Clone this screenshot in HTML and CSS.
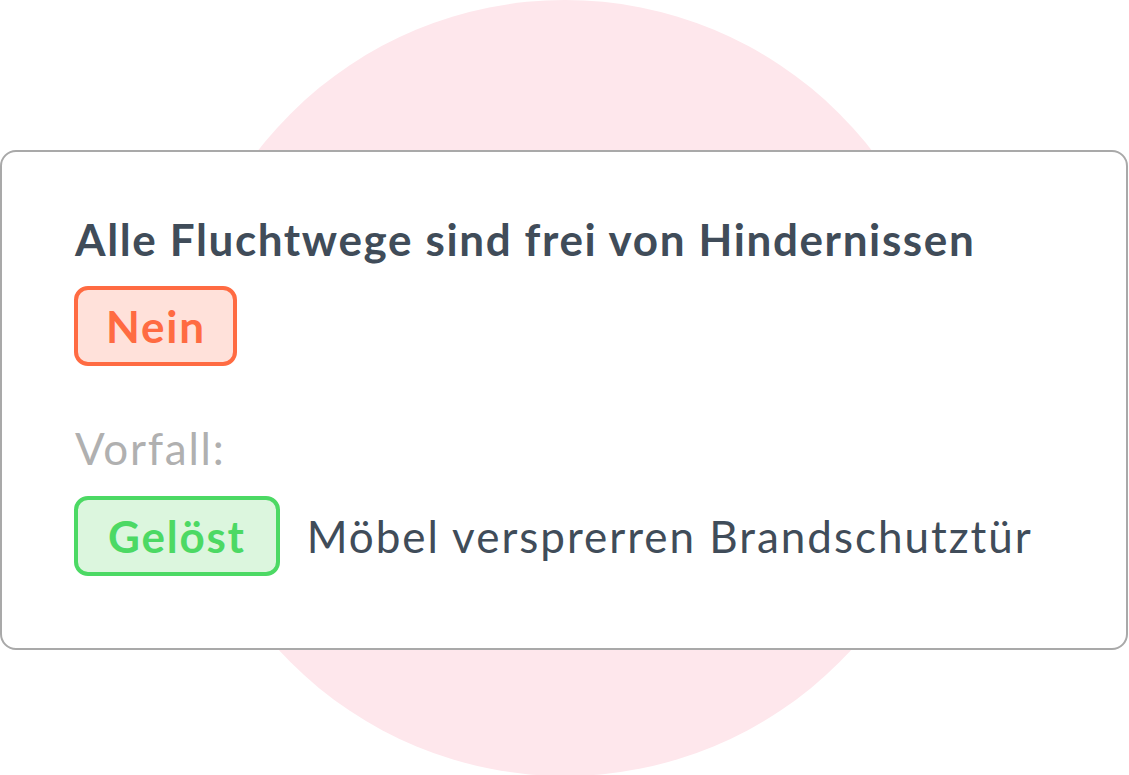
FILE: index.html
```html
<!DOCTYPE html>
<html lang="de">
<head>
<meta charset="UTF-8">
<meta name="viewport" content="width=device-width, initial-scale=1.0">
<title>Fluchtwege</title>
<link rel="stylesheet" href="styles.css">
</head>
<body>

<div class="stage">
    <div class="backdrop"></div>

    <div class="card">
        <h2 class="question">Alle Fluchtwege sind frei von Hindernissen</h2>
        <span class="tag tag-no">Nein</span>

        <p class="label">Vorfall:</p>
        <div class="incident">
            <span class="tag tag-done">Gelöst</span>
            <span class="incident-text">Möbel versprerren Brandschutztür</span>
        </div>
    </div>
</div>

</body>
</html>
```

FILE: styles.css
```css
body {
    margin: 0;
    background-color: #ffffff;
    font-family: Lato, "Open Sans", sans-serif;
    font-size: 44px;
    line-height: 1.2;
    letter-spacing: 0.04em;
    color: #404c59;
}
.stage {
    display: grid;
    height: 775px;
    overflow: hidden;
}
.stage > * {
    grid-area: 1 / 1;
}
/* Pink circle behind the card */
.backdrop {
    width: 776px;
    height: 776px;
    border-radius: 50%;
    background-color: #fee7ec;
    justify-self: center;
    align-self: center;
}
.card {
    align-self: start;
    box-sizing: border-box;
    height: 500px;
    margin: 150px 1px 0 0;
    padding: 61px 40px 0 72px;
    background-color: #ffffff;
    border: 2px solid #a9a9a9;
    border-radius: 16px;
    display: flex;
    flex-direction: column;
    align-items: flex-start;
}
.question {
    margin: 0 0 0 1px;
    font-size: 44px;
    font-weight: 700;
    letter-spacing: 0.037em;
}
.tag {
    display: inline-block;
    font-weight: 700;
    padding: 10px 27px 9px 28px;
    border: 4px solid;
    border-radius: 14px;
}
.tag-no {
    margin-top: 20px;
    color: #ff6b42;
    border-color: #ff6b42;
    background-color: #ffe1da;
}
.label {
    margin: 56px 0 0 1px;
    color: #b0b0b0;
}
.incident {
    margin-top: 22px;
    display: flex;
    align-items: center;
    gap: 27px;
}
.tag-done {
    padding-left: 30px;
    padding-right: 30px;
    color: #4cd964;
    border-color: #4cd964;
    background-color: #dcf6de;
}
.incident-text {
    letter-spacing: 0.045em;
}
```
